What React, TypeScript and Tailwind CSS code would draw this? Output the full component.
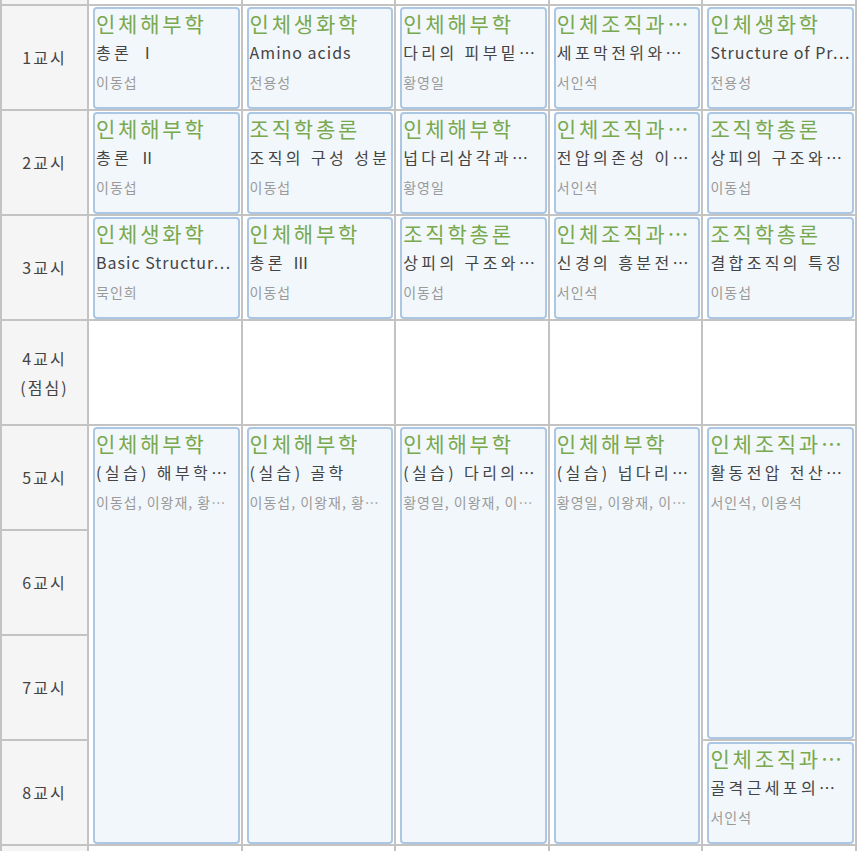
import React from "react";

type Cls = { t: string; s: string; p: string; latin?: boolean };

const font = { fontFamily: '"Noto Sans CJK KR", "Noto Sans", sans-serif' };

const rows: Cls[][] = [
  [
    { t: "인체해부학", s: "총론 Ⅰ", p: "이동섭" },
    { t: "인체생화학", s: "Amino acids", p: "전용성", latin: true },
    { t: "인체해부학", s: "다리의 피부밑…", p: "황영일" },
    { t: "인체조직과…", s: "세포막전위와…", p: "서인석" },
    { t: "인체생화학", s: "Structure of Pr…", p: "전용성", latin: true },
  ],
  [
    { t: "인체해부학", s: "총론 Ⅱ", p: "이동섭" },
    { t: "조직학총론", s: "조직의 구성 성분", p: "이동섭" },
    { t: "인체해부학", s: "넙다리삼각과…", p: "황영일" },
    { t: "인체조직과…", s: "전압의존성 이…", p: "서인석" },
    { t: "조직학총론", s: "상피의 구조와…", p: "이동섭" },
  ],
  [
    { t: "인체생화학", s: "Basic Structur…", p: "묵인희", latin: true },
    { t: "인체해부학", s: "총론 Ⅲ", p: "이동섭" },
    { t: "조직학총론", s: "상피의 구조와…", p: "이동섭" },
    { t: "인체조직과…", s: "신경의 흥분전…", p: "서인석" },
    { t: "조직학총론", s: "결합조직의 특징", p: "이동섭" },
  ],
];

const afternoon: Cls[] = [
  { t: "인체해부학", s: "(실습) 해부학…", p: "이동섭, 이왕재, 황…" },
  { t: "인체해부학", s: "(실습) 골학", p: "이동섭, 이왕재, 황…" },
  { t: "인체해부학", s: "(실습) 다리의…", p: "황영일, 이왕재, 이…" },
  { t: "인체해부학", s: "(실습) 넙다리…", p: "황영일, 이왕재, 이…" },
  { t: "인체조직과…", s: "활동전압 전산…", p: "서인석, 이용석" },
];

function Card({ c }: { c: Cls }) {
  return (
    <div className="bg-white h-full pl-[4px] pr-[1px] pt-[1px] min-w-0">
      <div className="h-full rounded-[4px] border-2 border-[#acc7e3] bg-[#f2f7fb] px-[1px] min-w-0 flex flex-col">
        <div className="h-[29px] leading-[29px] text-[21px] tracking-[2.8px] text-[#78a94e] whitespace-nowrap">
          {c.t}
        </div>
        <div
          className={
            c.latin
              ? "h-[29px] leading-[29px] text-[16px] tracking-[1px] text-[#444] whitespace-nowrap"
              : "h-[29px] leading-[29px] text-[16px] tracking-[3.4px] text-[#444] whitespace-nowrap"
          }
        >
          {c.s}
        </div>
        <div className="h-[31px] leading-[31px] text-[14px] tracking-[1px] text-[#9a9a9a] whitespace-nowrap">
          {c.p}
        </div>
      </div>
    </div>
  );
}

function Time({ children }: { children: React.ReactNode }) {
  return (
    <div className="bg-[#f5f5f5] flex flex-col items-center justify-center text-[16px] leading-[29px] tracking-[2px] text-[#444]">
      {children}
    </div>
  );
}

function Blank() {
  return <div className="bg-white" />;
}

export default function App() {
  return (
    <div className="bg-white w-[860px] h-[851px] overflow-hidden" style={font}>
      <div className="w-[857px] grid grid-cols-[85px_repeat(5,minmax(0,1fr))] grid-rows-[4px_repeat(8,103px)_5px] gap-[2px] bg-[#c3c3c3] px-[2px]">
        {/* partial top row */}
        <div className="bg-[#f5f5f5]" />
        <Blank />
        <Blank />
        <Blank />
        <Blank />
        <Blank />

        {rows.map((r, i) => (
          <React.Fragment key={i}>
            <Time>{i + 1}교시</Time>
            {r.map((c, j) => (
              <Card key={j} c={c} />
            ))}
          </React.Fragment>
        ))}

        <Time>
          <span>4교시</span>
          <span>(점심)</span>
        </Time>
        <Blank />
        <Blank />
        <Blank />
        <Blank />
        <Blank />

        <Time>5교시</Time>
        <div className="row-span-4 min-w-0">
          <Card c={afternoon[0]} />
        </div>
        <div className="row-span-4 min-w-0">
          <Card c={afternoon[1]} />
        </div>
        <div className="row-span-4 min-w-0">
          <Card c={afternoon[2]} />
        </div>
        <div className="row-span-4 min-w-0">
          <Card c={afternoon[3]} />
        </div>
        <div className="row-span-3 min-w-0">
          <Card c={afternoon[4]} />
        </div>

        <Time>6교시</Time>
        <Time>7교시</Time>
        <Time>8교시</Time>
        <Card c={{ t: "인체조직과…", s: "골격근세포의…", p: "서인석" }} />

        {/* partial bottom row */}
        <div className="bg-[#f5f5f5]" />
        <Blank />
        <Blank />
        <Blank />
        <Blank />
        <Blank />
      </div>
    </div>
  );
}
